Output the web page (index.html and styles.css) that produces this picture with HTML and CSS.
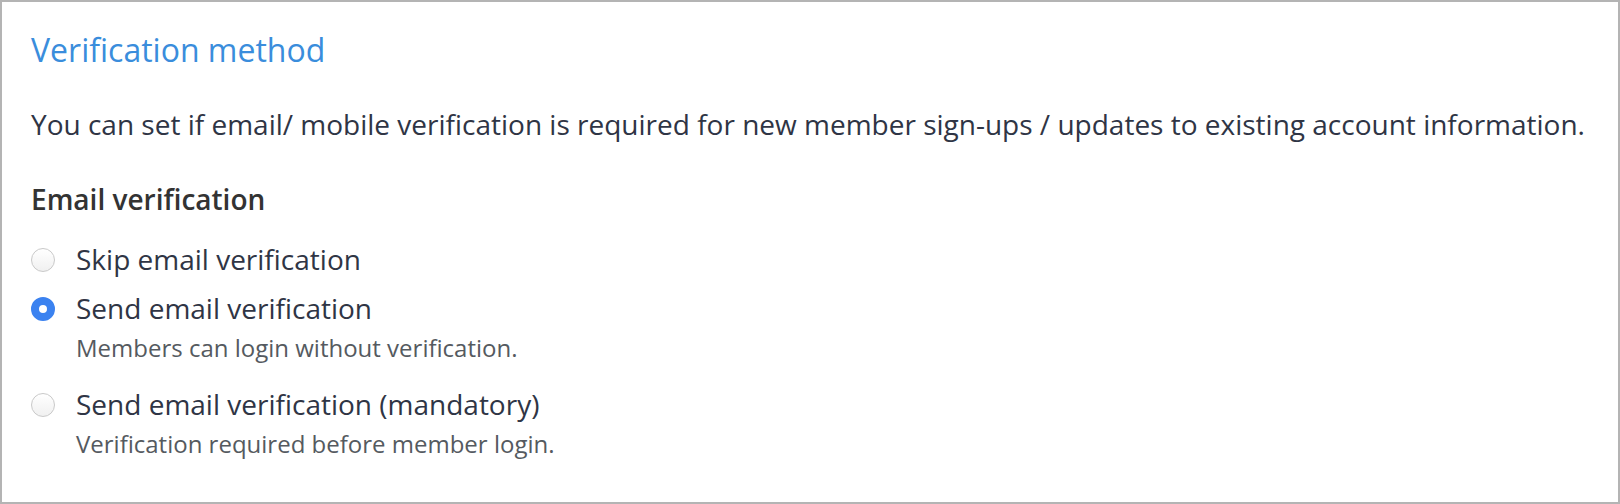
FILE: index.html
```html
<!DOCTYPE html>
<html lang="en">
<head>
<meta charset="UTF-8">
<meta name="viewport" content="width=device-width, initial-scale=1.0">
<title>Verification method</title>
<link rel="stylesheet" href="styles.css">
</head>
<body>
<section class="panel">
    <h2 class="panel_title">Verification method</h2>
    <p class="panel_intro">You can set if email/ mobile verification is required for new member sign-ups / updates to existing account information.</p>

    <div class="group">
        <h3 class="group_title">Email verification</h3>
        <label class="option">
            <input type="radio" name="email_verify" value="skip">
            <span class="radio"></span>
            <span class="option_text">
                <span class="option_label">Skip email verification</span>
            </span>
        </label>
        <label class="option">
            <input type="radio" name="email_verify" value="send" checked>
            <span class="radio"></span>
            <span class="option_text">
                <span class="option_label">Send email verification</span>
                <span class="option_desc">Members can login without verification.</span>
            </span>
        </label>
        <label class="option">
            <input type="radio" name="email_verify" value="mandatory">
            <span class="radio"></span>
            <span class="option_text">
                <span class="option_label">Send email verification (mandatory)</span>
                <span class="option_desc">Verification required before member login.</span>
            </span>
        </label>
    </div>
</section>
</body>
</html>
```

FILE: styles.css
```css
* {
    margin: 0;
    padding: 0;
    box-sizing: border-box;
    font-family: "Open Sans", Arial, sans-serif;
}

body {
    width: 1620px;
    height: 504px;
    background: #ffffff;
}

.panel {
    height: 504px;
    border: 2px solid #b4b4b4;
    padding: 26px 29px;
}

.panel_title {
    font-size: 32px;
    font-weight: 400;
    line-height: 44px;
    color: #3a8ddc;
}

.panel_intro {
    margin-top: 32px;
    font-size: 28px;
    line-height: 40px;
    color: #2f3545;
}

.group {
    margin-top: 35px;
}

.group_title {
    font-size: 28px;
    font-weight: 600;
    line-height: 40px;
    color: #333333;
    margin-bottom: 20px;
}

.option {
    display: flex;
    align-items: flex-start;
    gap: 21px;
    margin-bottom: 9px;
    cursor: pointer;
}

.option input {
    display: none;
}

.radio {
    flex: none;
    width: 24px;
    height: 24px;
    margin-top: 9px;
    border-radius: 50%;
    border: 1px solid #c9c9c9;
    background: linear-gradient(#ffffff, #f0f0f0);
}

.option input:checked + .radio {
    border: 8px solid #3b82f0;
    background: #ffffff;
}

.option_text {
    display: flex;
    flex-direction: column;
}

.option_label {
    font-size: 28px;
    line-height: 40px;
    color: #2f3545;
}

.option_desc {
    font-size: 24px;
    line-height: 40px;
    padding-bottom: 7px;
    color: #555a60;
}
```
